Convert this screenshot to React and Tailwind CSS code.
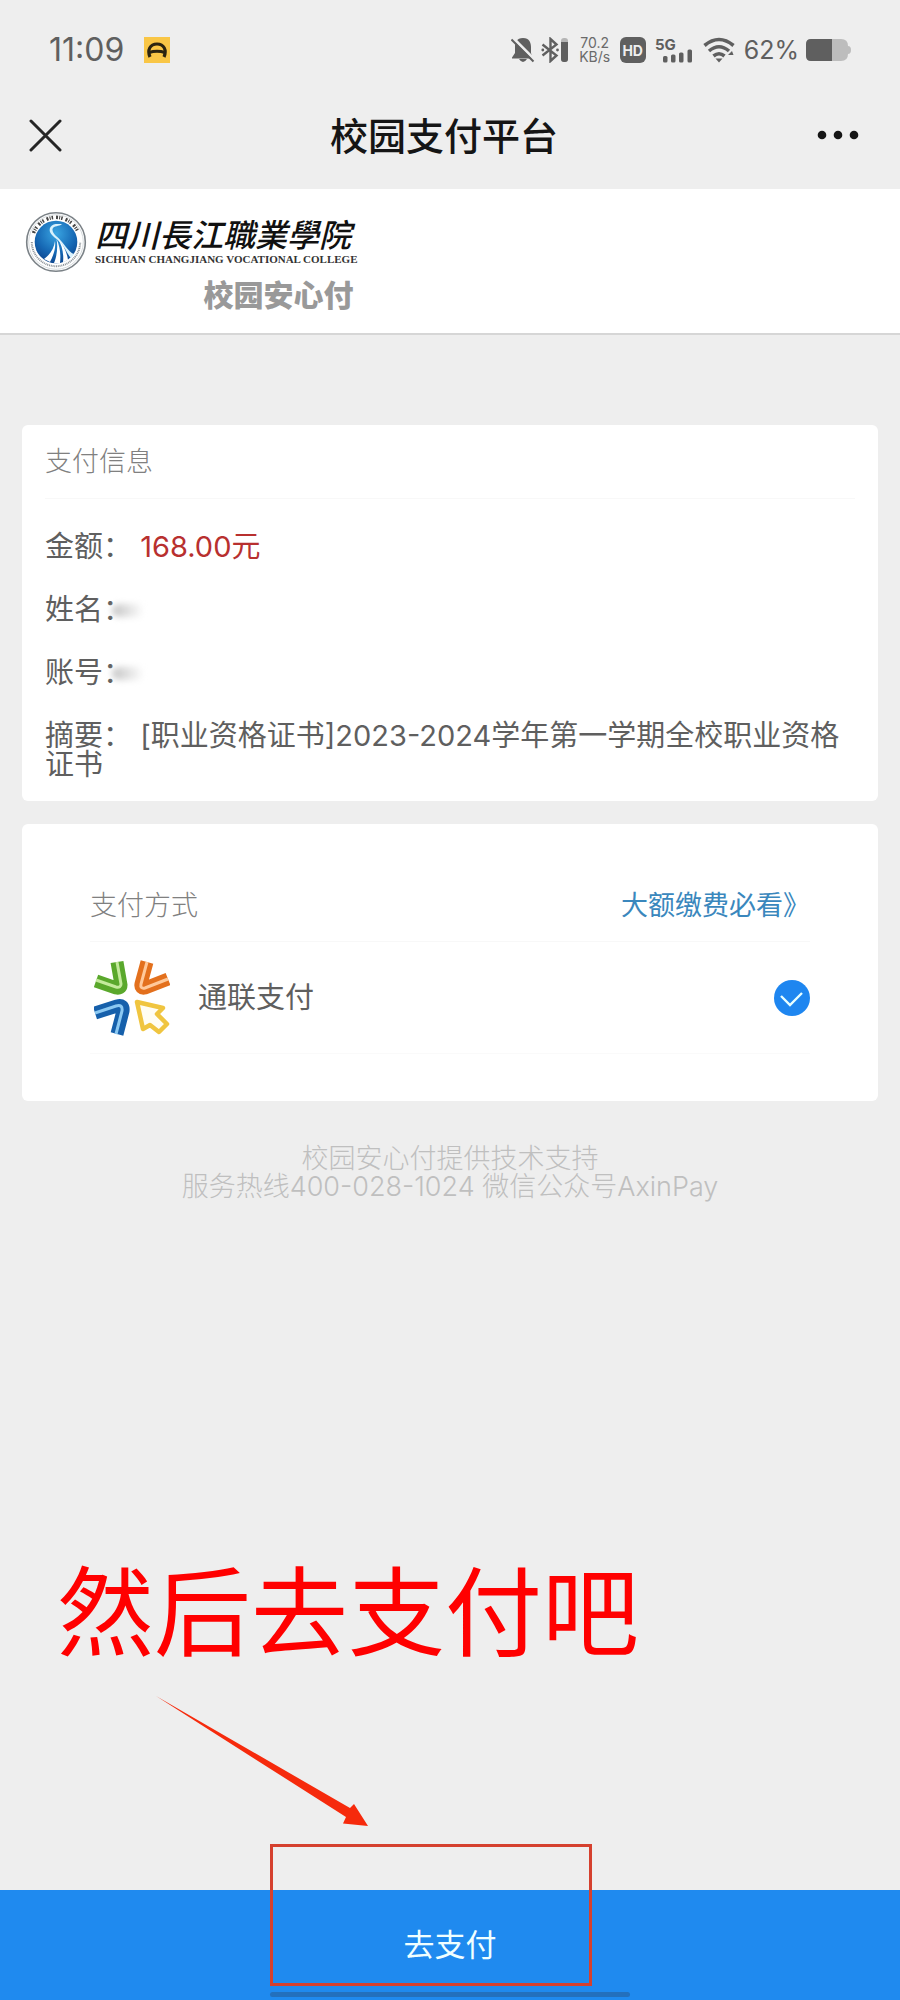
import React from "react";

function CollegeSeal() {
  return (
    <svg viewBox="0 0 62 62" className="h-[62px] w-[62px] shrink-0" aria-hidden="true">
      <defs>
        <radialGradient id="seal" cx="0.5" cy="0.3" r="0.75">
          <stop offset="0" stopColor="#3aa5e2" />
          <stop offset="0.6" stopColor="#1668b4" />
          <stop offset="1" stopColor="#0c4189" />
        </radialGradient>
      </defs>
      <circle cx="31" cy="31" r="29.3" fill="#fff" stroke="#7b8287" strokeWidth="1.6" />
      <circle cx="31" cy="31" r="27.3" fill="none" stroke="#c4cbd0" strokeWidth="0.7" />
      <path d="M8.500 22 A24 24 0 0 1 53.500 22" fill="none" stroke="#444" strokeWidth="3.500" strokeDasharray="2 1.200 1 1 1.500 3" />
      <path d="M6.800 31 A24.200 24.200 0 0 0 55.200 31" fill="none" stroke="#8b9298" strokeWidth="2" strokeDasharray="1 0.8" />
      <circle cx="31" cy="31" r="21.300" fill="url(#seal)" />
      <path d="M37 13 C34 16 29 14 27.500 18 C27 23 33 26 37 31 C42 37 46 43 49.500 43 L46 47 C42 43 40 36 35 31 C30 26 22 22 25.500 16 C28 12 33 13 37 13Z" fill="#d9f1fc" />
      <path d="M33 28 C38 33 42 41 43 49 L38 51.500 C39 43 37 34 33 28Z" fill="#fff" />
      <path d="M31.500 28 C35 35 36 44 35 52 L29 52 C32 45 33 35 31.500 28Z" fill="#fff" />
      <path d="M30 30 C31 38 28 45 25 51 L19 48 C26 43 29 37 30 30Z" fill="#fff" />
    </svg>
  );
}

function AllinpayLogo() {
  return (
    <svg viewBox="0 0 76 76" className="h-[76px] w-[76px] shrink-0" fill="none" aria-hidden="true">
      <path d="M23 2 L27 25 Q27 29 22 28 L2 21" stroke="#5aa82c" strokeWidth="13" />
      <path d="M23 2 L27 24 Q27 28 22 27 L2 20" stroke="#c4ea9c" strokeWidth="3" />
      <path d="M53 2 L47 24 Q46 29 51 28 L74 19" stroke="#e3701d" strokeWidth="13" />
      <path d="M53 2 L47 24 Q46 29 51 28 L74 19" stroke="#ffc99a" strokeWidth="3" />
      <path d="M1 53 L23 46 Q30 44 29 51 L23 74" stroke="#1660ab" strokeWidth="13" />
      <path d="M1 53 L22 46 Q29 44 28 51 L22 74" stroke="#8cc9f2" strokeWidth="3" />
      <path d="M43 42 L69 48 L63 54 L73 64 L65 72 L56 65 L49 69 Z" stroke="#f0c540" strokeWidth="4.500" strokeLinejoin="round" fill="#fffdf3" />
    </svg>
  );
}

function StatusIcons() {
  return (
    <div className="flex items-center text-[#5f5f5f]">
      <svg viewBox="0 0 24 26" className="h-[26px] w-6" aria-label="静音">
        <path d="M12 1 C5.500 1 4 6 4 10 V16 L1 20.500 V21.500 H21.500 V20.500 L20 16 V10 C20 6 18.500 1 12 1Z M8 22 Q12 28 16 22Z" fill="currentColor" />
        <path d="M1.500 0.500 L24 23" stroke="#eee" strokeWidth="3" />
        <path d="M0.500 2.500 L22.500 24.500" stroke="currentColor" strokeWidth="2" />
      </svg>
      <svg viewBox="0 0 28 26" className="ml-[6px] h-[26px] w-7" fill="none" aria-label="蓝牙">
        <path d="M1.500 7.500 L15.500 18.500 L9.500 24 V2 L15.500 7.500 L1.500 18.500" stroke="currentColor" strokeWidth="2.400" />
        <circle cx="1.800" cy="13" r="1.400" fill="currentColor" />
        <circle cx="16.500" cy="13" r="1.400" fill="currentColor" />
        <rect x="20" y="1" width="7" height="24" rx="3" fill="#b5b5b5" />
        <path d="M20 5 H27 V22 Q27 25 24 25 H23 Q20 25 20 22Z" fill="currentColor" />
      </svg>
      <div className="ml-[10px] w-[32px] text-center text-[14px] leading-[14px] text-[#6a6a6a]">
        70.2
        <br />
        KB/s
      </div>
      <div className="ml-[9px] flex h-[26px] w-[26px] items-center justify-center rounded-[6px] bg-[#5f5f5f] text-[14px] font-bold text-[#eeeeee]">
        HD
      </div>
      <svg viewBox="0 0 38 30" className="ml-[9px] h-[30px] w-[38px]" fill="currentColor" aria-label="5G">
        <text x="0" y="15" fontSize="15" fontWeight="700">5G</text>
        <rect x="8" y="21" width="4.500" height="6.500" rx="1.500" />
        <rect x="16" y="19.500" width="4.500" height="8" rx="1.500" />
        <rect x="24" y="17.500" width="4.500" height="10" rx="1.500" />
        <rect x="32.500" y="14.500" width="4.500" height="13" rx="1.500" />
      </svg>
      <svg viewBox="0 0 32 26" className="ml-[10px] h-[26px] w-8" fill="none" stroke="currentColor" strokeWidth="3.600" aria-label="无线网络">
        <path d="M1.500 8.500 Q16 -3.500 30.500 8.500" />
        <path d="M6 14 Q16 5.500 26 14" />
        <path d="M10.500 19 Q16 14.500 21.500 19" />
        <path d="M12.500 21.500 H19.500 L16 25.500Z" fill="currentColor" stroke="none" />
        <path d="M25 18 L30.500 18 L29 14Z" fill="currentColor" stroke="none" />
      </svg>
      <div className="ml-[9px] text-[25px] leading-[26px]">62%</div>
      <svg viewBox="0 0 46 24" className="ml-[6px] h-6 w-[46px]" aria-label="电量">
        <path d="M7 1 H36 Q43 1 43 8 V16 Q43 23 36 23 H7 Q1 23 1 17 V7 Q1 1 7 1Z M43 8 Q46 8 46 12 Q46 16 43 16Z" fill="#bdbdbd" />
        <path d="M27 1 H6 Q1 1 1 6 V18 Q1 23 6 23 H27Z" fill="currentColor" />
      </svg>
    </div>
  );
}

function Smudge() {
  return (
    <span className="relative" aria-hidden="true">
      <span className="absolute -left-[20px] top-[12px] h-[13px] w-[32px] rounded-full bg-linear-to-r from-[#c4c4c4] to-white blur-[3px]" />
    </span>
  );
}

export default function App() {
  return (
    <div className="flex min-h-screen flex-col bg-[#eeeeee] font-['Inter','Noto_Sans_CJK_SC',sans-serif] text-[#5f5f5f]">
      <div className="flex h-[100px] items-center justify-between pr-[49px] pl-[49px]">
        <div className="flex items-center gap-[20px]">
          <time className="text-[32px] leading-[32px]">11:09</time>
          <svg viewBox="0 0 26 26" className="h-[26px] w-[26px]" aria-hidden="true">
            <rect width="26" height="26" fill="#f9c646" />
            <path d="M6 20 C3 13 6 7 13 7 C20 7 23 13 20 20" fill="none" stroke="#2b2411" strokeWidth="3.200" />
            <path d="M5 15.500 Q13 13 21 15.500" fill="none" stroke="#2b2411" strokeWidth="3.200" />
          </svg>
        </div>
        <StatusIcons />
      </div>

      <header className="grid grid-cols-[1fr_auto_1fr] items-center pr-[40px] pb-[17px] pl-[28px]">
        <button type="button" aria-label="关闭" className="w-fit">
          <svg viewBox="0 0 35 35" className="h-[35px] w-[35px]" fill="none" stroke="#252525" strokeWidth="3" strokeLinecap="round">
            <path d="M3 2 L32 31 M32 2 L3 31" />
          </svg>
        </button>
        <h1 className="text-[38px] leading-[72px] font-medium text-[#151515]">校园支付平台</h1>
        <button type="button" aria-label="更多" className="w-fit justify-self-end">
          <svg viewBox="0 0 44 12" className="h-3 w-[44px]" fill="#151515">
            <circle cx="6" cy="5" r="4.300" />
            <circle cx="22" cy="5" r="4.300" />
            <circle cx="38" cy="5" r="4.300" />
          </svg>
        </button>
      </header>

      <div className="border-b-2 border-[#d6d6d6] bg-white pt-[22px] pb-[21px] pl-[25px]">
        <div className="flex w-fit gap-[8px]">
          <CollegeSeal />
          <div className="flex flex-col">
            <div className="pt-[8px] text-[32px] leading-[34px] font-medium text-[#111] italic">四川長江職業學院</div>
            <div className="font-['Liberation_Serif',serif] text-[11px] leading-[12px] font-bold text-[#333]">
              SICHUAN CHANGJIANG VOCATIONAL COLLEGE
            </div>
            <div className="mt-[13px] self-end pr-[4px] text-[30px] leading-[34px] font-black text-[#999]">校园安心付</div>
          </div>
        </div>
      </div>

      <main className="flex flex-1 flex-col px-[22px] pt-[90px]">
        <section className="rounded-[6px] bg-white px-[23px] pt-[19px] pb-[22px]">
          <h2 className="text-[27px] leading-[36px] font-light text-[#808080]">支付信息</h2>
          <hr className="mt-[18px] border-[#f8f8f8]" />
          <ul className="mt-[33px] flex flex-col gap-[34px] text-[29px] leading-[29px]">
            <li>
              {"金额： "}
              <span className="text-[#b8302f]">168.00元</span>
            </li>
            <li>
              姓名：
              <Smudge />
            </li>
            <li>
              账号：
              <Smudge />
            </li>
            <li>摘要： [职业资格证书]2023-2024学年第一学期全校职业资格证书</li>
          </ul>
        </section>

        <section className="mt-[23px] rounded-[6px] bg-white px-[68px] pt-[64px] pb-[47px]">
          <div className="flex items-center justify-between text-[27px] leading-[36px]">
            <h2 className="font-light text-[#808080]">支付方式</h2>
            <a href="#notice" className="text-[#3a87bd]">大额缴费必看》</a>
          </div>
          <hr className="mt-[17px] border-[#f8f8f8]" />
          <label className="flex h-[112px] items-center border-b border-[#fafafa] pl-[4px]">
            <AllinpayLogo />
            <span className="ml-[28px] text-[29px] leading-[36px]">通联支付</span>
            <span className="ml-auto grid">
              <input type="radio" name="method" defaultChecked className="col-start-1 row-start-1 h-9 w-9 appearance-none rounded-full bg-[#1e86f0]" />
              <svg viewBox="0 0 36 36" className="pointer-events-none col-start-1 row-start-1 h-9 w-9" fill="none" stroke="#e8ffff" strokeWidth="2.400" aria-hidden="true">
                <path d="M7 16 L16 25 L28 13" />
              </svg>
            </span>
          </label>
        </section>

        <p className="mt-[44px] text-center text-[27px] leading-[28px] font-light text-[#bfbfbf]">
          校园安心付提供技术支持
          <br />
          服务热线400-028-1024 微信公众号AxinPay
        </p>

        <div className="mt-auto mb-[64px] pl-[35px]">
          <p className="text-[97px] leading-[100px] text-[#ff0000]">然后去支付吧</p>
          <svg viewBox="0 0 214 130" className="mt-[33px] ml-[99px] h-[130px] w-[214px]" fill="#f62a0c" aria-hidden="true">
            <path d="M0 0 L194 112 L198 108 L212 130 L187 127.500 L190 121 Z" />
          </svg>
        </div>
      </main>

      <footer className="relative">
        <button type="button" className="block h-[110px] w-full bg-[#1f8aef] text-[31px] text-[#f0ffff]">
          去支付
        </button>
        <div className="pointer-events-none absolute bottom-[14px] left-[30%] h-[142px] w-[322px] border-[3px] border-[#d5402e]" />
        <div className="pointer-events-none absolute bottom-[3px] left-[30%] h-[5px] w-[40%] rounded-full bg-[#2370bd]" />
      </footer>
    </div>
  );
}
